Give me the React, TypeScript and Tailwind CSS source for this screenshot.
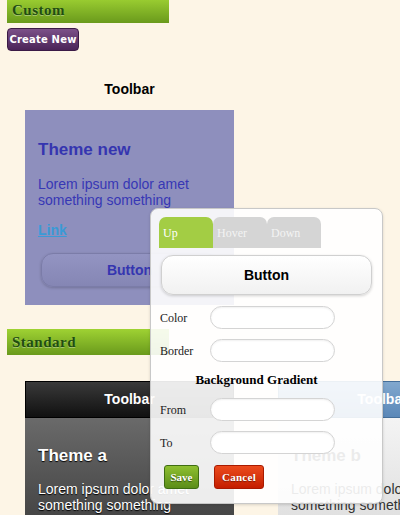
import React from "react";

const serif = "font-['Liberation_Serif','DejaVu_Serif',serif]";
const sans = "font-['Liberation_Sans',Arial,sans-serif]";

function SectionHeader({ label, extra }: { label: string; extra?: string }) {
  return (
    <div
      className={`ml-[7px] w-[162px] h-[26px] flex items-center pl-[5px] bg-linear-to-b from-[#9fd233] to-[#6a9a1c] ${extra ?? ""}`}
    >
      <span className={`${serif} text-[15px] font-bold tracking-[0.5px] text-[#1f4d12] [text-shadow:0_1px_0_rgba(255,255,255,0.35)]`}>
        {label}
      </span>
    </div>
  );
}

function Field({ label }: { label: string }) {
  return (
    <div className="flex items-center h-[23px]">
      <span className={`${serif} text-[12px] text-[#222] w-[50px]`}>{label}</span>
      <div className="w-[125px] h-[23px] rounded-full bg-white border border-[#d4d4d4] shadow-[inset_0_1px_2px_rgba(0,0,0,0.06)]" />
    </div>
  );
}

export default function App() {
  return (
    <div className={`relative w-[400px] h-[515px] overflow-hidden bg-[#fdf5e6] ${sans}`}>
      <SectionHeader label="Custom" extra="-mt-[3px]" />
      <div className="ml-[7px] mt-[5px] w-[72px] h-[23px] rounded-[4px] border border-[#3b1a46] bg-linear-to-b from-[#7c5189] to-[#4b2458] flex items-center justify-center">
        <span className="font-['DejaVu_Sans',sans-serif] text-[10px] font-bold text-white tracking-[0.2px]">Create New</span>
      </div>

      <div className="ml-[25px] w-[209px] mt-[29px] text-center text-[14px] font-bold text-black leading-[18px]">Toolbar</div>

      <div className="ml-[25px] mt-[12px] w-[209px] h-[195px] bg-[#8e8fbd] px-[13px] pt-[30px]">
        <div className="text-[17px] font-bold text-[#3535b0] leading-[20px]">Theme new</div>
        <div className="mt-[16px] text-[14px] text-[#3737b5] leading-[16px]">
          Lorem ipsum dolor amet
          <br />
          something something
        </div>
        <div className="mt-[14px] text-[14px] font-bold text-[#3a9ad6] underline leading-[16px]">Link</div>
        <div className="mt-[15px] ml-[3px] w-[177px] h-[34px] rounded-[12px] border border-[#7b7ca8] bg-linear-to-b from-[#9394c2] to-[#8586b4] shadow-[0_1px_3px_rgba(0,0,0,0.2)] flex items-center justify-center">
          <span className="text-[14px] font-bold text-[#3535b0]">Button</span>
        </div>
      </div>

      <div className="mt-[24px]">
        <SectionHeader label="Standard" />
      </div>

      <div className="mt-[26px] ml-[25px] flex gap-[44px]">
        <div className="w-[209px] shrink-0">
          <div className="h-[37px] bg-linear-to-b from-[#3a3a3a] to-[#111] border border-[#000] flex items-center justify-center">
            <span className="text-[14px] font-bold text-white">Toolbar</span>
          </div>
          <div className="h-[120px] bg-linear-to-b from-[#6a6a6a] to-[#3e3e3e] px-[13px] pt-[28px]">
            <div className="text-[17px] font-bold text-white leading-[20px] [text-shadow:0_1px_1px_#000]">Theme a</div>
            <div className="mt-[15px] text-[14px] text-white leading-[16px] [text-shadow:0_1px_1px_#000]">
              Lorem ipsum dolor amet
              <br />
              something something
            </div>
          </div>
        </div>
        <div className="w-[209px] shrink-0">
          <div className="h-[37px] bg-linear-to-b from-[#81a8ce] to-[#5b88b8] border border-[#456f9a] flex items-center justify-center">
            <span className="text-[14px] font-bold text-white">Toolbar</span>
          </div>
          <div className="h-[120px] bg-linear-to-b from-[#f4f4f4] to-[#dcdcdc] px-[13px] pt-[28px]">
            <div className="text-[17px] font-bold text-[#333] leading-[20px]">Theme b</div>
            <div className="mt-[15px] text-[14px] text-[#333] leading-[16px]">
              Lorem ipsum dolor amet
              <br />
              something something
            </div>
          </div>
        </div>
      </div>

      {/* Overlay editor panel */}
      <div className="absolute left-[150px] top-[208px] w-[233px] h-[296px] rounded-[8px] border border-[#c8c8c8] bg-white/90 shadow-[0_1px_3px_rgba(0,0,0,0.15)] px-[8px] pt-[8px]">
        <div className="flex">
          <div className="w-[54px] h-[31px] rounded-t-[7px] bg-[#a3cd44] pl-[4px] flex items-center">
            <span className={`${serif} text-[12px] text-white`}>Up</span>
          </div>
          <div className="w-[54px] h-[31px] rounded-t-[7px] bg-[#d5d5d5] pl-[4px] flex items-center">
            <span className={`${serif} text-[12px] text-[#f3f3f3]`}>Hover</span>
          </div>
          <div className="w-[54px] h-[31px] rounded-t-[7px] bg-[#d5d5d5] pl-[4px] flex items-center">
            <span className={`${serif} text-[12px] text-[#f3f3f3]`}>Down</span>
          </div>
        </div>
        <div className="mt-[7px] ml-[2px] w-[211px] h-[40px] rounded-[12px] border border-[#d0d0d0] bg-linear-to-b from-white to-[#f1f1f1] shadow-[0_1px_3px_rgba(0,0,0,0.18)] flex items-center justify-center">
          <span className={`${sans} text-[14px] font-bold text-black`}>Button</span>
        </div>
        <div className="mt-[11px] ml-[1px] flex flex-col gap-[10px]">
          <Field label="Color" />
          <Field label="Border" />
        </div>
        <div className={`mt-[11px] text-center ${serif} text-[13px] font-bold text-black leading-[14px] pr-[20px]`}>
          Background Gradient
        </div>
        <div className="mt-[11px] ml-[1px] flex flex-col gap-[10px]">
          <Field label="From" />
          <Field label="To" />
        </div>
        <div className="mt-[11px] ml-[5px] flex gap-[15px]">
          <div className="w-[35px] h-[24px] rounded-[3px] border border-[#3f6d12] bg-linear-to-b from-[#8fc030] to-[#5b8d18] flex items-center justify-center">
            <span className={`${serif} text-[11px] font-bold text-white [text-shadow:0_1px_1px_rgba(0,0,0,0.5)]`}>Save</span>
          </div>
          <div className="w-[50px] h-[24px] rounded-[3px] border border-[#a81a00] bg-linear-to-b from-[#ec4a1c] to-[#c41c00] flex items-center justify-center">
            <span className={`${serif} text-[11px] font-bold text-white tracking-[0.3px] [text-shadow:0_1px_1px_rgba(0,0,0,0.4)]`}>Cancel</span>
          </div>
        </div>
      </div>
    </div>
  );
}
